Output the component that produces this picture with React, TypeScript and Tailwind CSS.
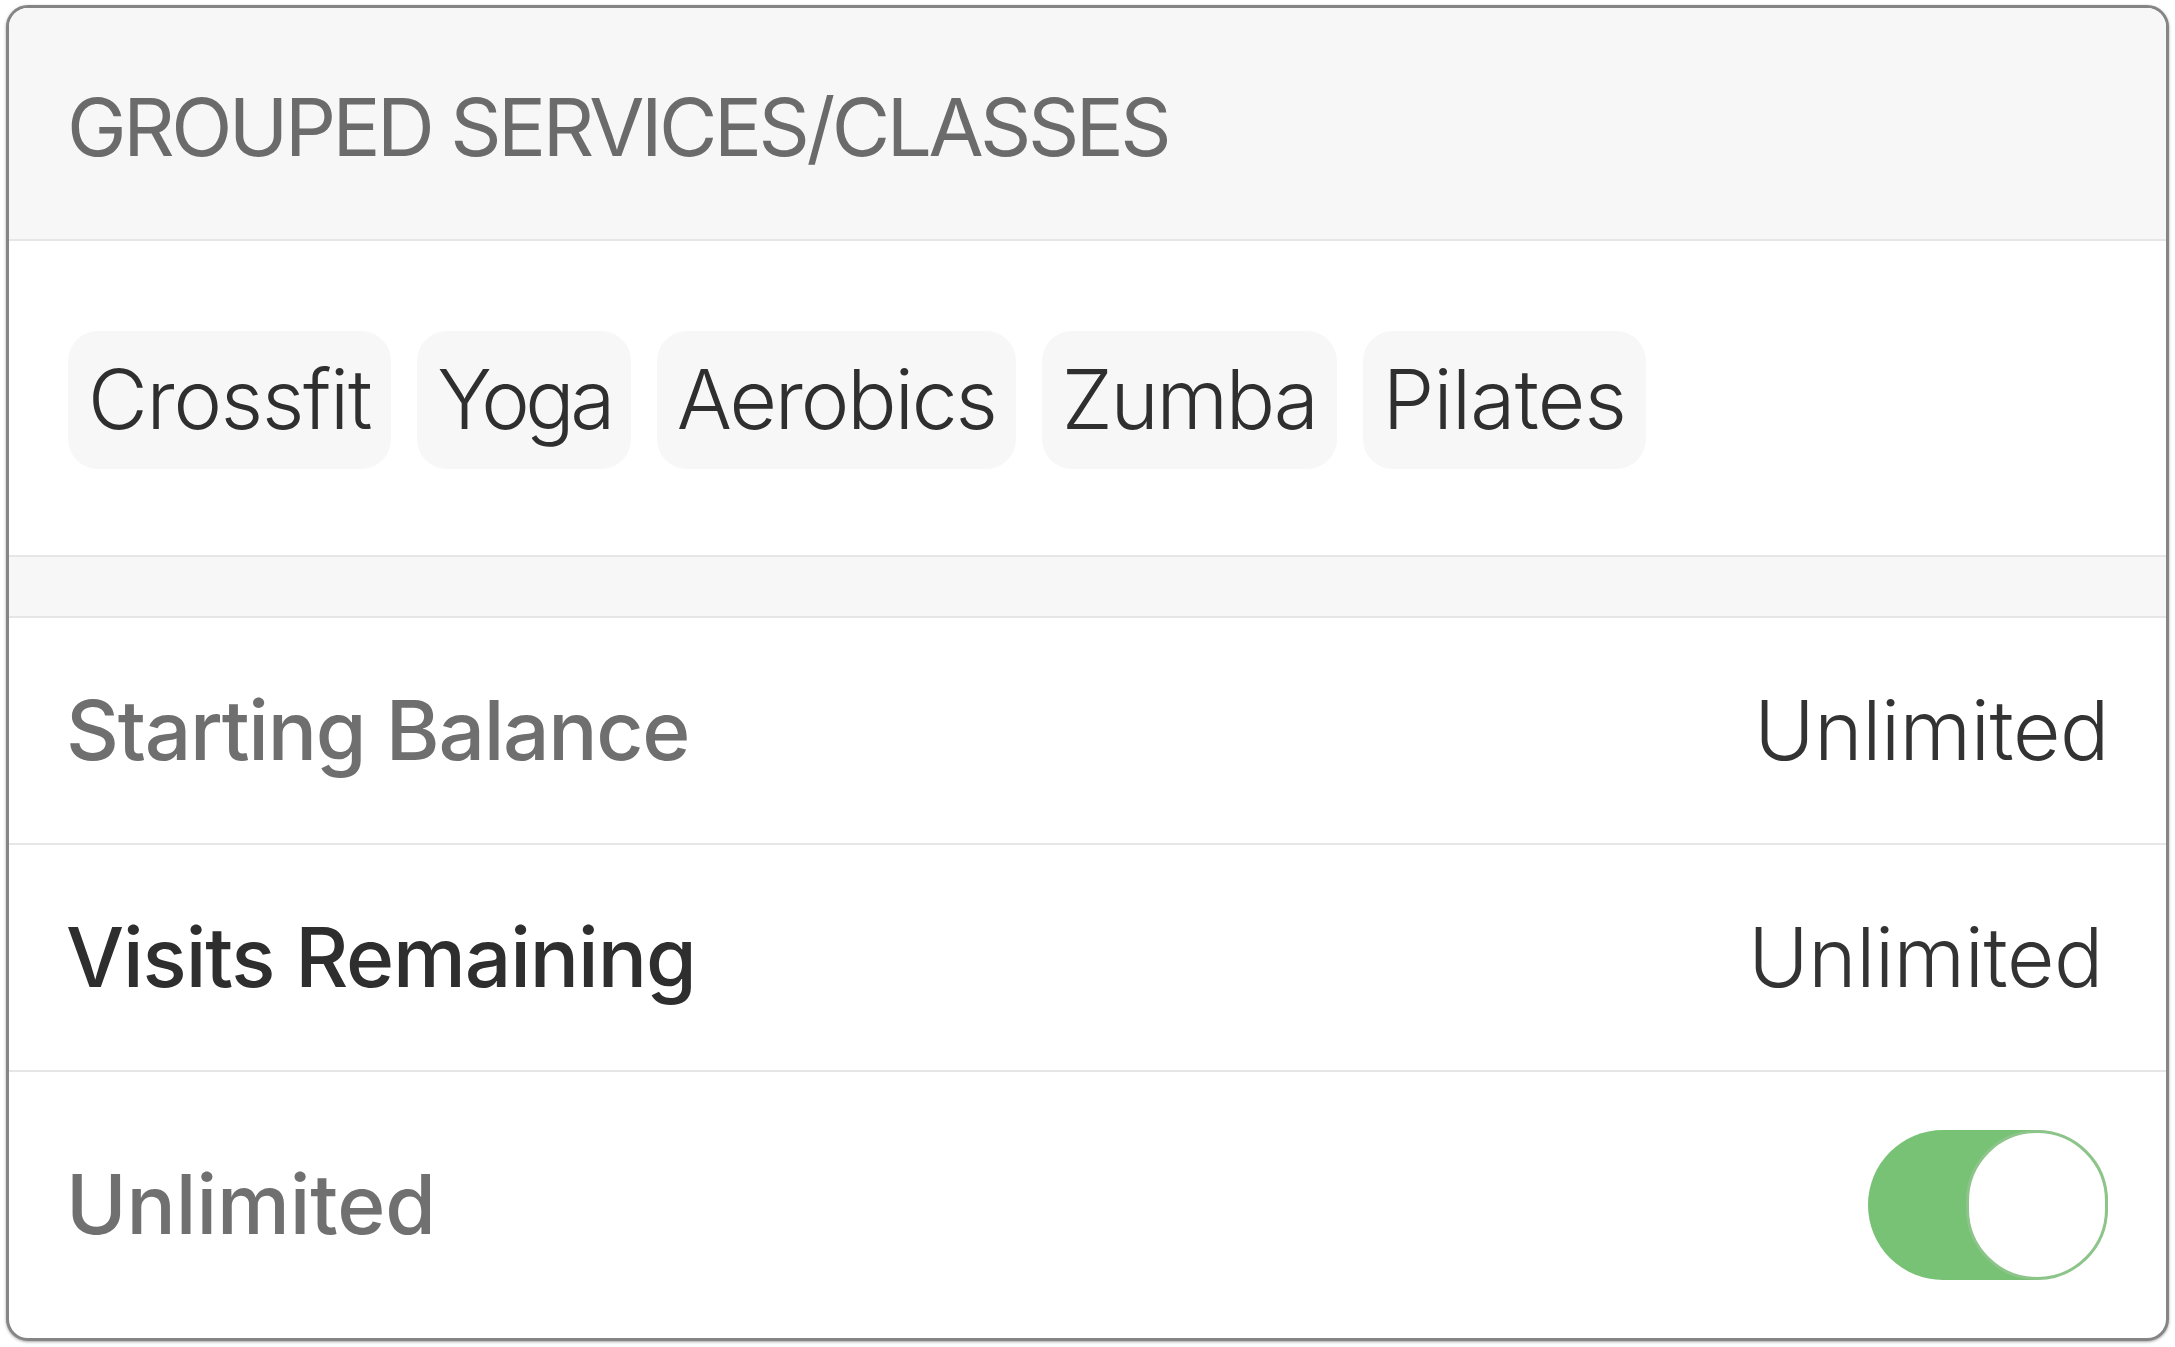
import React from "react";

const chips = [
  { t: "Crossfit", tr: "tracking-[-1.2px]" },
  { t: "Yoga", tr: "tracking-[-4.5px]" },
  { t: "Aerobics", tr: "tracking-[-2.1px]" },
  { t: "Zumba", tr: "tracking-[-2.2px]" },
  { t: "Pilates", tr: "tracking-[-0.7px]" },
];

export default function App() {
  return (
    <div
      className="w-[2175px] h-[1347px] bg-white pt-[5px] pl-[6px] pr-[6px]"
      style={{ fontFamily: "Inter, 'Noto Sans', sans-serif" }}
    >
      <div className="h-[1336px] w-full rounded-[22px] border-[3px] border-[#858585] shadow-[0_1px_3px_rgba(0,0,0,0.35)] overflow-hidden flex flex-col bg-white">
        {/* header */}
        <div className="h-[233px] shrink-0 bg-[#f7f7f7] border-b-2 border-[#e6e6e6] flex items-center pl-[58px] pt-[6px]">
          <span className="text-[80px] leading-none text-[#6b6b6b] tracking-[-3.5px] font-normal">
            GROUPED SERVICES/CLASSES
          </span>
        </div>
        {/* chips */}
        <div className="h-[314px] shrink-0 flex items-center gap-[26px] pl-[59px] pt-[4px]">
          {chips.map((c) => (
            <div
              key={c.t}
              className="h-[138px] rounded-[30px] bg-[#f7f7f7] px-[20px] flex items-center"
            >
              <span className={`text-[82px] leading-none font-light text-[#2f2f2f] ${c.tr}`}>{c.t}</span>
            </div>
          ))}
        </div>
        {/* gray band */}
        <div className="h-[63px] shrink-0 bg-[#f7f7f7] border-y-2 border-[#e6e6e6]" />
        {/* rows */}
        <div className="h-[227px] shrink-0 border-b-2 border-[#e6e6e6] flex items-center justify-between pl-[57px] pr-[57px]">
          <span className="text-[82px] leading-none font-medium text-[#6f6f6f] tracking-[-1.3px]">Starting Balance</span>
          <span className="text-[82px] leading-none font-light text-[#333333] tracking-[-0.4px]">Unlimited</span>
        </div>
        <div className="h-[227px] shrink-0 border-b-2 border-[#e6e6e6] flex items-center justify-between pl-[57px] pr-[63px]">
          <span className="text-[82px] leading-none font-medium text-[#2e2e2e] tracking-[-1.1px]">Visits Remaining</span>
          <span className="text-[82px] leading-none font-light text-[#333333] tracking-[-0.4px]">Unlimited</span>
        </div>
        <div className="flex-1 flex items-center justify-between pl-[57px] pr-[58px]">
          <span className="text-[82px] leading-none font-medium text-[#707070] tracking-[-0.1px]">Unlimited</span>
          <div className="w-[240px] h-[150px] rounded-full bg-[#78c275] flex justify-end">
            <div className="w-[142px] h-[150px] rounded-full bg-white border-[3px] border-[#8cc489]" />
          </div>
        </div>
      </div>
    </div>
  );
}
